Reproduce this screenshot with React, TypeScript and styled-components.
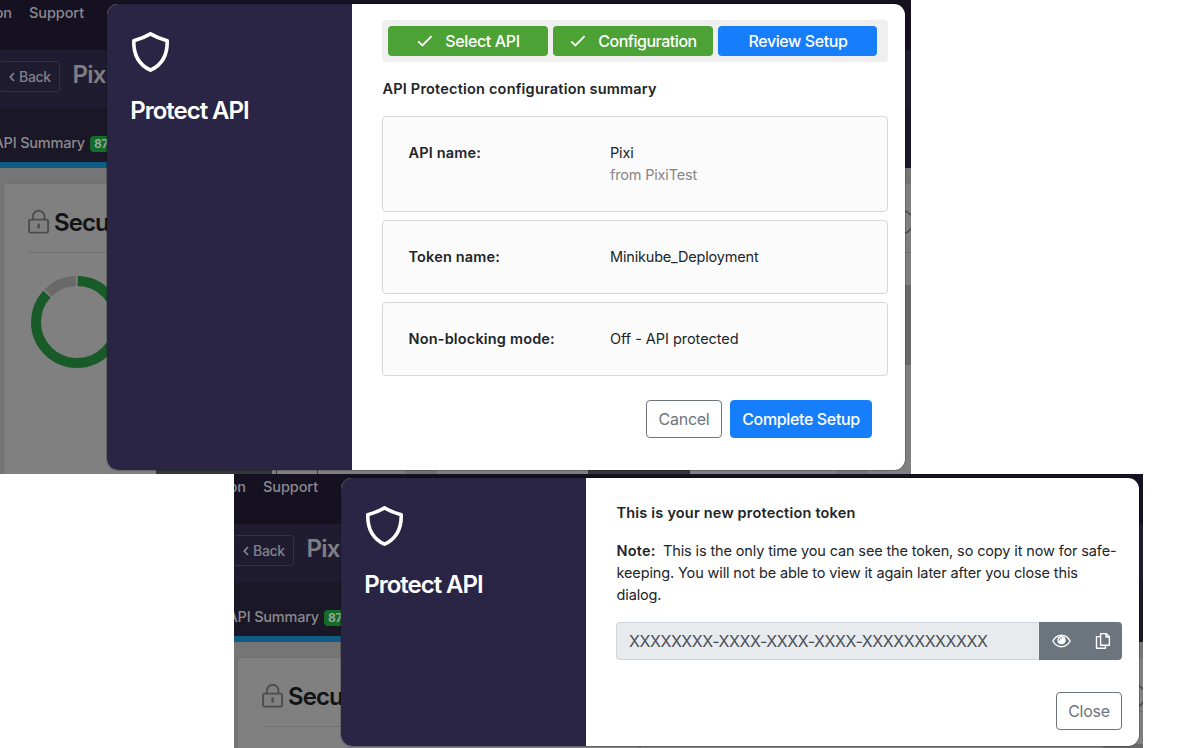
import React from "react";
import styled, { createGlobalStyle, css } from "styled-components";

const Global = createGlobalStyle`
  *, *::before, *::after { box-sizing: border-box; }
  body {
    margin: 0;
    background: #fff;
    color: #212529;
    font-family: Inter, "Noto Sans", sans-serif;
    font-size: 14.5px;
    line-height: 22px;
  }
`;

const Page = styled.main`
  display: flex;
  flex-direction: column;
  width: 1197px;
  height: 748px;
  overflow: hidden;
`;

/* One captured window: the dimmed page and its dialog share a grid cell. */
const Window = styled.section<{ $width: number; $height: number; $indent?: number }>`
  display: grid;
  flex: none;
  width: ${(p) => p.$width}px;
  height: ${(p) => p.$height}px;
  margin-left: ${(p) => p.$indent ?? 0}px;
  overflow: hidden;

  > * {
    grid-area: 1 / 1;
  }
`;

/* ---------- dimmed page ---------- */

const Backdrop = styled.div`
  display: flex;
  flex-direction: column;
  min-width: 0;
  min-height: 0;
  overflow: hidden;
  background: #757575;
  color: #868590;
`;

const NavBar = styled.nav`
  flex: none;
  display: flex;
  gap: 17px;
  height: 50px;
  padding-top: 2px;
  background: #151121;
  font-weight: 500;
  letter-spacing: -0.08px;
  color: #8a8890;
`;

const CutItem = styled.span<{ $width: number }>`
  display: flex;
  justify-content: flex-end;
  width: ${(p) => p.$width}px;
  white-space: nowrap;
  overflow: hidden;
`;

const TitleBar = styled.header`
  flex: none;
  display: flex;
  align-items: flex-start;
  height: 58px;
  padding-top: 11px;
  background: #1f1b30;
`;

const BackButton = styled.div`
  display: flex;
  align-items: center;
  gap: 4px;
  width: 61px;
  height: 31px;
  margin-left: -1px;
  padding-left: 9px;
  border: 1px solid #35323f;
  border-radius: 3px;
  font-size: 14px;
  font-weight: 500;
  letter-spacing: -0.3px;
  color: #82818a;
`;

const ApiTitle = styled.h2`
  margin: 0 0 0 12.5px;
  font-size: 24px;
  line-height: 28px;
  font-weight: 600;
  letter-spacing: -0.8px;
  color: #7f7e84;
`;

const TabBar = styled.div`
  flex: none;
  display: flex;
  align-items: center;
  gap: 5px;
  height: 54px;
  padding-top: 16px;
  background: #1a1726;
  font-size: 14.5px;
  font-weight: 500;
  letter-spacing: -0.2px;
  color: #8a898f;

  ${CutItem} {
    margin-top: -1px;
  }
`;

const Score = styled.span`
  flex: none;
  width: 34px;
  height: 16px;
  margin-top: 1px;
  padding-left: 4px;
  border-radius: 4px;
  background: #156b2a;
  color: #93a898;
  font-size: 12px;
  font-weight: 700;
  line-height: 16px;
`;

const TabLine = styled.div`
  flex: none;
  height: 6px;
  background: linear-gradient(90deg, #0f5b84 0 400px, #1a1726 400px);
`;

const Board = styled.div`
  flex: 1;
  display: flex;
  gap: 1px;
  min-height: 0;
  padding: 15px 0 0 3px;
`;

const Card = styled.div<{ $grow?: boolean }>`
  flex: ${(p) => (p.$grow ? "1" : "none")};
  width: ${(p) => (p.$grow ? "auto" : "402px")};
  min-width: 0;
  overflow: hidden;
  padding: 25px 24px 0;
  border: 1px solid #707070;
  border-bottom: 0;
  border-radius: ${(p) => (p.$grow ? "0" : "4px 4px 0 0")};
  border-right-width: ${(p) => (p.$grow ? 0 : 1)}px;
  background: #808080;
`;

const CardHead = styled.div`
  display: flex;
  gap: 4px;
  height: 44px;
  border-bottom: 1px solid #717171;

  h3 {
    margin: 0;
    font-size: 24px;
    line-height: 28px;
    font-weight: 600;
    letter-spacing: -0.9px;
    color: #111315;
  }
`;

const EdgeCard = styled.div`
  flex: none;
  display: flex;
  flex-direction: column;
  width: 40px;
  margin-left: -40px;
  border-top: 1px solid #707070;
  background: #808080;
`;

const EdgeHead = styled.div`
  display: flex;
  justify-content: flex-end;
  align-items: flex-start;
  height: 69px;
  padding-top: 25px;
  border-bottom: 1px solid #717171;
`;

const EdgeBlock = styled.div`
  height: 80px;
  margin-top: 32px;
  background: #696969;
`;

const Footing = styled.div`
  flex: none;
  display: flex;
  height: 4px;
  background: #808080;
`;

const Segment = styled.span<{ $w: number; $c?: string }>`
  flex: none;
  width: ${(p) => p.$w}px;
  background: ${(p) => p.$c ?? "#808080"};
`;

/* ---------- dialog ---------- */

const Dialog = styled.div<{ $height: number }>`
  z-index: 1;
  display: flex;
  width: 798px;
  height: ${(p) => p.$height}px;
  margin: 4px 0 0 107px;
  border-radius: 11px;
  background: #fff;
  box-shadow: 0 0 0 1px rgba(0, 0, 0, 0.2);
  overflow: hidden;
`;

const Sidebar = styled.aside`
  flex: none;
  width: 245px;
  padding: 27px 24px 0;
  background: #2a2445;
  color: #fff;

  svg {
    display: block;
  }

  h1 {
    margin: 23px 0 0 -0.7px;
    font-size: 24px;
    line-height: 30px;
    font-weight: 600;
    letter-spacing: -1.03px;
    white-space: nowrap;
  }
`;

const Body = styled.div<{ $top: number }>`
  flex: 1;
  display: flex;
  flex-direction: column;
  padding: ${(p) => p.$top}px 17px 0 30px;
`;

const Steps = styled.div`
  display: flex;
  gap: 5px;
  height: 42px;
  padding: 6px 11px 6px 6px;
  border-radius: 4px;
  background: #efefef;
`;

const Step = styled.div<{ $current?: boolean; $tight: number }>`
  flex: none;
  width: ${(p) => (p.$current ? 159 : 160)}px;
  display: flex;
  align-items: center;
  justify-content: center;
  gap: 12px;
  padding-left: 1px;
  border-radius: 4px;
  background: ${(p) => (p.$current ? "#167efb" : "#4ca234")};
  color: #fff;
  font-size: 16px;
  font-weight: 500;
  letter-spacing: ${(p) => p.$tight}px;
`;

const Heading = styled.h4<{ $gap: number }>`
  margin: ${(p) => p.$gap}px 0 0 0.5px;
  font-size: 14.5px;
  font-weight: 600;
  letter-spacing: 0.2px;
  white-space: nowrap;
`;

const Rows = styled.dl`
  display: flex;
  flex-direction: column;
  gap: 8px;
  margin: 16px 0 0;
`;

const Row = styled.div`
  display: grid;
  grid-template-columns: 201px 1fr;
  padding: 25px;
  border: 1px solid #d7d7d9;
  border-radius: 4px;
  background: #fbfbfb;

  dt {
    padding-left: 0.5px;
    font-weight: 600;
    letter-spacing: 0.17px;
  }
`;

const RowValue = styled.dd<{ $tight: number }>`
  margin: 0 0 0 1px;
  letter-spacing: ${(p) => p.$tight}px;
`;

const Origin = styled.div`
  color: #868686;
`;

const Actions = styled.div<{ $top: number; $right: number }>`
  display: flex;
  justify-content: flex-end;
  gap: 8px;
  margin: ${(p) => p.$top}px ${(p) => p.$right}px 0 0;
`;

const Button = styled.button<{ $primary?: boolean; $width: number }>`
  width: ${(p) => p.$width}px;
  height: 38px;
  padding: 0;
  border: 1px solid #6c757d;
  border-radius: 4px;
  background: #fff;
  color: #6c757d;
  font: 400 16px/24px Inter, "Noto Sans", sans-serif;
  letter-spacing: -0.25px;
  white-space: nowrap;
  ${(p) =>
    p.$primary &&
    css`
      border-color: #167efb;
      background: #167efb;
      color: #fff;
      font-weight: 500;
      letter-spacing: -0.36px;
    `}
`;

const Note = styled.p`
  margin: 16px 0 0 0.5px;
  letter-spacing: -0.13px;
  white-space: nowrap;

  b {
    margin-right: 7.5px;
    font-weight: 600;
    letter-spacing: 0.2px;
  }
`;

const TokenField = styled.div`
  display: flex;
  height: 38px;
  margin-top: 16px;
`;

const TokenValue = styled.div`
  flex: 1;
  padding-left: 12px;
  border: 1px solid #ced4da;
  border-right: 0;
  border-radius: 4px 0 0 4px;
  background: #e8ebee;
  color: #495057;
  font-size: 16px;
  line-height: 36px;
  letter-spacing: -0.44px;
  white-space: nowrap;
`;

const IconGroup = styled.div`
  display: flex;
  width: 83px;
  align-items: center;
  gap: 24px;
  padding-left: 13px;
  border-radius: 0 4px 4px 0;
  background: #6c757d;
`;

const Shield = () => (
  <svg width="40" height="42" viewBox="0 0 40 42" fill="none" stroke="#fff" strokeWidth="3.6" strokeLinejoin="round">
    <path d="M19.5 2.9C15 5.6 8 8.3 2.8 9.7C2.4 23.5 8 33.8 19.5 39.2C31 33.8 36.6 23.5 36.2 9.7C31 8.3 24 5.6 19.5 2.9Z" />
  </svg>
);

const Check = () => (
  <svg width="16" height="12" viewBox="0 0 16 12" fill="none" stroke="#fff" strokeWidth="1.8">
    <path d="M1.2 6.3L5.4 10.4L14.6 1.2" />
  </svg>
);

const Chevron = () => (
  <svg width="6" height="10" viewBox="0 0 6 10" fill="none" stroke="#82818a" strokeWidth="1.8">
    <path d="M5 1L1.3 5L5 9" />
  </svg>
);

const Lock = () => (
  <svg width="22" height="26" viewBox="0 0 22 26" fill="none" stroke="#4c4c4c" strokeWidth="1.9">
    <rect x="1.1" y="10.6" width="19" height="13" rx="1.4" />
    <path d="M4.9 10.4V7.6A5.8 5.8 0 0 1 16.5 7.6V10.4" />
    <path d="M10.6 14.5V19.5" strokeWidth="2.4" />
  </svg>
);

const Ring = styled.svg`
  display: block;
  margin: 22px 0 0 2px;
`;

const Donut = () => (
  <Ring width="94" height="94" viewBox="0 0 94 94" fill="none" strokeWidth="10">
    <circle cx="47" cy="47" r="41" stroke="#195a29" pathLength="100" strokeDasharray="86.6 13.4" strokeDashoffset="-0.3" transform="rotate(-90 47 47)" />
    <circle cx="47" cy="47" r="41" stroke="#696969" pathLength="100" strokeDasharray="11.9 88.1" strokeDashoffset="-87.6" transform="rotate(-90 47 47)" />
  </Ring>
);

const EdgeArc = () => (
  <svg width="8" height="28" viewBox="0 0 8 28" fill="none" stroke="#4c4c4c" strokeWidth="1.7">
    <path d="M0 1.2C4 2.2 8 5 10 9M0 25.2C4 24 7 22 9 18" />
  </svg>
);

const Eye = () => (
  <svg width="19" height="14" viewBox="0 0 19 14">
    <path d="M0.8 7C3 3.1 6 1.3 9.5 1.3S16 3.1 18.2 7C16 10.9 13 12.7 9.5 12.7S3 10.9 0.8 7Z" fill="none" stroke="#fff" strokeWidth="1.4" />
    <circle cx="9.5" cy="6.2" r="4.1" fill="#fff" />
    <path d="M7.1 6.2A2.5 2.5 0 0 1 9.5 3.8" fill="none" stroke="#6c757d" strokeWidth="0.9" strokeLinecap="round" />
  </svg>
);

const Copy = () => (
  <svg width="16" height="18" viewBox="0 0 16 18" fill="none" stroke="#fff" strokeWidth="1.4" strokeLinejoin="round">
    <path d="M5.6 1.6H11.2L14.4 4.8V13.2H5.6Z" />
    <path d="M11 1.6V5H14.4" />
    <path d="M5.6 4.6H1.5V16.2H10.5V13.2" />
  </svg>
);

const DimmedPage = ({ footing }: { footing?: boolean }) => (
  <Backdrop>
    <NavBar>
      <CutItem $width={12}>on</CutItem>
      <span>Support</span>
    </NavBar>
    <TitleBar>
      <BackButton>
        <Chevron />
        Back
      </BackButton>
      <ApiTitle>Pixi</ApiTitle>
    </TitleBar>
    <TabBar>
      <CutItem $width={85}>API Summary</CutItem>
      <Score>87</Score>
    </TabBar>
    <TabLine />
    <Board>
      <Card>
        <CardHead>
          <Lock />
          <h3>Security</h3>
        </CardHead>
        {footing && <Donut />}
      </Card>
      <Card $grow />
      <EdgeCard>
        <EdgeHead>
          <EdgeArc />
        </EdgeHead>
        <EdgeBlock />
      </EdgeCard>
    </Board>
    {footing && (
      <Footing>
        <Segment $w={3} $c="#757575" />
        <Segment $w={1} $c="#707070" />
        <Segment $w={152} />
        <Segment $w={116} $c="#33363a" />
        <Segment $w={4} />
        <Segment $w={1} $c="#33363a" />
        <Segment $w={40} />
        <Segment $w={1} $c="#33363a" />
        <Segment $w={87} />
        <Segment $w={32} $c="#707070" />
        <Segment $w={151} />
        <Segment $w={102} $c="#33363a" />
        <Segment $w={147} />
        <Segment $w={31} $c="#777" />
      </Footing>
    )}
  </Backdrop>
);

const DialogSide = () => (
  <Sidebar>
    <Shield />
    <h1>Protect API</h1>
  </Sidebar>
);

export default function App() {
  return (
    <Page>
      <Global />
      <Window $width={911} $height={474}>
        <DimmedPage footing />
        <Dialog $height={466}>
          <DialogSide />
          <Body $top={16}>
            <Steps>
              <Step $tight={-0.38}>
                <Check />
                Select API
              </Step>
              <Step $tight={-0.48}>
                <Check />
                Configuration
              </Step>
              <Step $current $tight={-0.4}>
                Review Setup
              </Step>
            </Steps>
            <Heading $gap={16}>API Protection configuration summary</Heading>
            <Rows>
              <Row>
                <dt>API name:</dt>
                <RowValue $tight={-0.18}>
                  Pixi
                  <Origin>from PixiTest</Origin>
                </RowValue>
              </Row>
              <Row>
                <dt>Token name:</dt>
                <RowValue $tight={-0.18}>Minikube_Deployment</RowValue>
              </Row>
              <Row>
                <dt>Non-blocking mode:</dt>
                <RowValue $tight={-0.04}>Off - API protected</RowValue>
              </Row>
            </Rows>
            <Actions $top={24} $right={16}>
              <Button $width={76}>Cancel</Button>
              <Button $primary $width={142}>
                Complete Setup
              </Button>
            </Actions>
          </Body>
        </Dialog>
      </Window>
      <Window $width={909} $height={274} $indent={234}>
        <DimmedPage />
        <Dialog $height={268}>
          <DialogSide />
          <Body $top={24}>
            <Heading $gap={0}>This is your new protection token</Heading>
            <Note>
              <b>Note:</b>This is the only time you can see the token, so copy it now for safe-
              <br />
              keeping. You will not be able to view it again later after you close this
              <br />
              dialog.
            </Note>
            <TokenField>
              <TokenValue>XXXXXXXX-XXXX-XXXX-XXXX-XXXXXXXXXXXX</TokenValue>
              <IconGroup>
                <Eye />
                <Copy />
              </IconGroup>
            </TokenField>
            <Actions $top={32} $right={0}>
              <Button $width={66}>Close</Button>
            </Actions>
          </Body>
        </Dialog>
      </Window>
    </Page>
  );
}
